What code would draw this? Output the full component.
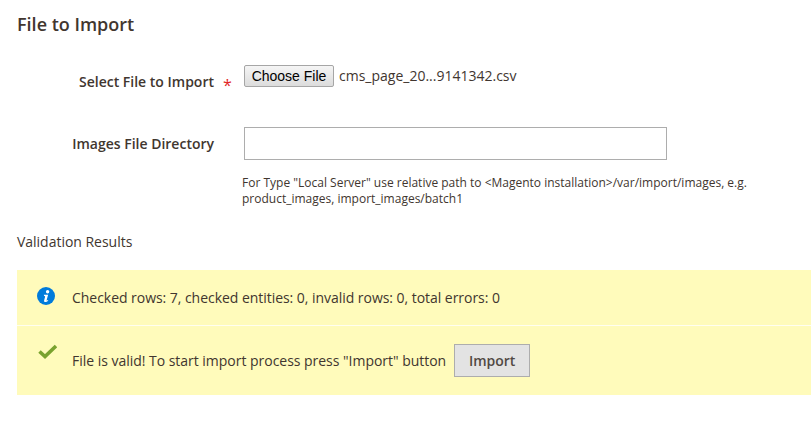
<script>
  const rows = [
    { label: "Select File to Import", required: true },
    { label: "Images File Directory", required: false }
  ];
</script>

<style>
  :global(body) {
    margin: 0;
    background: #fff;
  }

  .page {
    width: 811px;
    height: 439px;
    overflow: hidden;
    box-sizing: border-box;
    padding: 12px 0 0 17px;
    font-family: "Open Sans", sans-serif;
    color: #41362f;
    font-size: 14px;
  }

  h2 {
    margin: 0;
    font-size: 18px;
    line-height: 24px;
    font-weight: 600;
  }

  .row {
    display: grid;
    grid-template-columns: 197px 30px 1fr;
    align-items: start;
  }

  .file-row {
    margin-top: 29px;
    height: 62px;
  }

  .dir-row {
    height: 105px;
  }

  .label {
    font-weight: 600;
    text-align: right;
    line-height: 20px;
  }

  .file-row .label {
    padding-top: 7px;
  }

  .dir-row .label {
    padding-top: 7px;
  }

  .star {
    color: #e22626;
    font-size: 16px;
    line-height: 20px;
    padding: 10px 0 0 9px;
  }

  .file {
    display: flex;
    align-items: center;
    gap: 5px;
    height: 22px;
  }

  .choose {
    box-sizing: border-box;
    width: 90px;
    height: 22px;
    padding: 0;
    border: 1px solid #a6a6a6;
    border-radius: 2px;
    background: linear-gradient(#f5f5f5, #dcdcdc);
    color: #000;
    font-family: "Liberation Sans", Arial, sans-serif;
    font-size: 14px;
    line-height: 20px;
  }

  .name {
    line-height: 20px;
  }

  input {
    display: block;
    box-sizing: border-box;
    width: 423px;
    height: 33px;
    border: 1px solid #adadad;
    background: #fff;
    padding: 0 10px;
  }

  .note {
    margin: 15px 0 0 -2px;
    width: 530px;
    font-size: 12px;
    line-height: 16px;
  }

  .results {
    line-height: 20px;
    font-size: 14px;
    letter-spacing: -0.02px;
  }

  .messages {
    margin-top: 18px;
    background: #fffbbb;
    height: 125px;
  }

  .message {
    display: flex;
    box-sizing: border-box;
    letter-spacing: -0.04px;
  }

  .info {
    height: 56px;
    border-bottom: 1px solid #fffef0;
    padding: 17px 0 0 20px;
  }

  .valid {
    height: 69px;
    padding: 18px 0 0 20px;
    letter-spacing: -0.025px;
  }

  .icon {
    width: 18px;
    height: 18px;
    flex: none;
    display: block;
  }

  .check {
    width: 20px;
    height: 16px;
    margin-right: -2px;
  }

  .text {
    margin: 1px 0 0 17px;
    line-height: 20px;
  }

  .import {
    box-sizing: border-box;
    height: 33px;
    width: 76px;
    margin: 0 0 0 8px;
    padding: 0;
    border: 1px solid #adadad;
    background: #e3e3e3;
    color: #514943;
    font-family: "Open Sans", sans-serif;
    font-size: 14px;
    font-weight: 600;
  }

  .valid-line {
    display: flex;
    align-items: center;
    align-self: flex-start;
    margin-left: 17px;
  }
</style>

<div class="page">
  <h2>File to Import</h2>

  <div class="row file-row">
    <div class="label">{rows[0].label}</div>
    <div class="star">*</div>
    <div class="file">
      <button class="choose">Choose File</button>
      <span class="name">cms_page_20...9141342.csv</span>
    </div>
  </div>

  <div class="row dir-row">
    <div class="label">{rows[1].label}</div>
    <div></div>
    <div>
      <input type="text" />
      <p class="note">For Type "Local Server" use relative path to &lt;Magento installation&gt;/var/import/images, e.g. product_images, import_images/batch1</p>
    </div>
  </div>

  <div class="results">Validation Results</div>

  <div class="messages">
    <div class="message info">
      <svg class="icon" viewBox="0 0 18 18">
        <circle cx="9" cy="9" r="9" fill="#007bdb" />
        <circle cx="10.6" cy="4.7" r="1.7" fill="#fff" />
        <path d="M6.8 7.8h4.3l-1.5 5.4q-.1.5.4.4l1-.5.2.7q-1.4 1.3-3 1.3-1.5 0-1.1-1.5l1-3.9q.1-.7-.9-.6z" fill="#fff" />
      </svg>
      <div class="text">Checked rows: 7, checked entities: 0, invalid rows: 0, total errors: 0</div>
    </div>
    <div class="message valid">
      <svg class="icon check" viewBox="0 0 20 16">
        <path d="M2.5 7.5l5.5 5L19 2" fill="none" stroke="#79a22e" stroke-width="3.6" />
      </svg>
      <div class="valid-line">
        <span>File is valid! To start import process press "Import" button</span>
        <button class="import">Import</button>
      </div>
    </div>
  </div>
</div>
